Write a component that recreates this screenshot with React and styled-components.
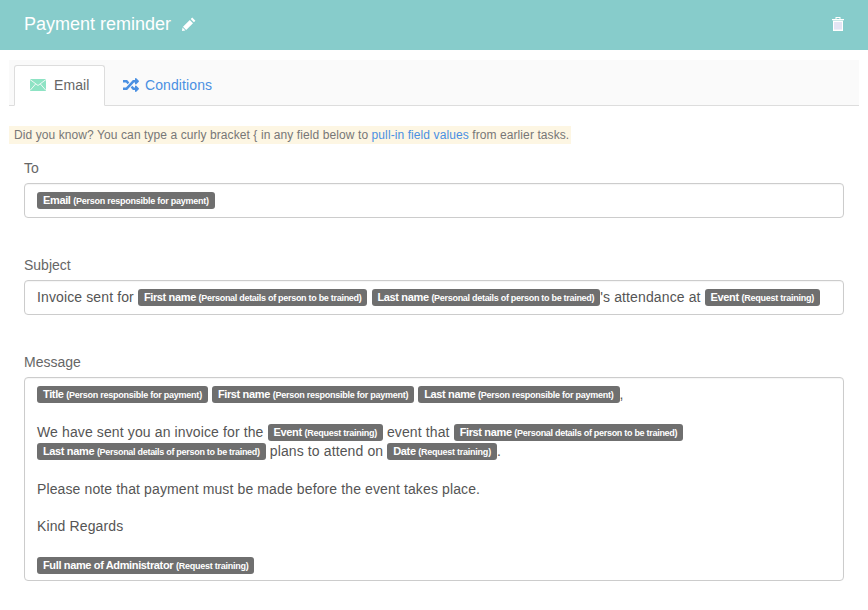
import React from "react";
import styled, { createGlobalStyle } from "styled-components";
import { FaRandom } from "react-icons/fa";

const Global = createGlobalStyle`
  html, body { margin: 0; padding: 0; background: #fff; }
  body { font-family: "Liberation Sans", Arial, sans-serif; font-size: 14px; color: #555; }
`;

const Page = styled.div`
  width: 868px;
  height: 610px;
  overflow: hidden;
`;

const Header = styled.header`
  height: 50px;
  background: #87cccb;
  display: flex;
  align-items: center;
  justify-content: space-between;
  padding: 0 24px 3px 24px;
  box-sizing: border-box;
`;

const TitleGroup = styled.div`
  display: flex;
  align-items: center;
  gap: 11px;
`;

const Title = styled.h1`
  margin: 0;
  font-size: 18px;
  font-weight: 400;
  line-height: 22px;
  color: #fff;
`;

const IconSvg = styled.svg`
  display: block;
  flex: none;
`;

const Tabs = styled.nav`
  margin: 10px 9px 0;
  height: 46px;
  box-sizing: border-box;
  background: #fafafa;
  border-bottom: 1px solid #ddd;
  display: flex;
  align-items: flex-end;
  padding-left: 5px;
`;

const Tab = styled.div`
  height: 41px;
  width: ${(p) => p.$width}px;
  box-sizing: border-box;
  margin-bottom: -1px;
  padding-left: ${(p) => p.$inset}px;
  display: flex;
  align-items: center;
  gap: ${(p) => p.$gap}px;
  font-size: 14px;
  letter-spacing: 0.1px;
  padding-bottom: 1px;
  color: ${(p) => (p.$active ? "#666" : "#4a90e2")};
  background: ${(p) => (p.$active ? "#fff" : "transparent")};
  border: 1px solid ${(p) => (p.$active ? "#ddd" : "transparent")};
  border-bottom-color: ${(p) => (p.$active ? "#fff" : "transparent")};
  border-radius: 3px 3px 0 0;
`;

const Tip = styled.p`
  margin: 20px 0 0 9px;
  width: 562px;
  height: 18px;
  box-sizing: border-box;
  padding-left: 5px;
  background: #fdf6e3;
  color: #777;
  font-size: 12px;
  letter-spacing: 0.09px;
  line-height: 18px;
  white-space: nowrap;
`;

const TipLink = styled.span`
  color: #4a90e2;
`;

const Form = styled.div`
  padding: 16px 24px 0;
`;

const FieldGroup = styled.section`
  margin-bottom: ${(p) => p.$gap}px;
`;

const Label = styled.label`
  display: block;
  height: 17px;
  line-height: 17px;
  margin-bottom: 6px;
  font-size: 14px;
  color: #666;
`;

const Box = styled.div`
  width: 820px;
  box-sizing: border-box;
  padding: 7px 12px 0;
  height: ${(p) => p.$height}px;
  border: 1px solid #ccc;
  border-radius: 4px;
  box-shadow: inset 0 1px 1px rgba(0, 0, 0, 0.04);
  font-size: 14px;
  line-height: 19px;
  color: #555;
  letter-spacing: 0.12px;
`;

const Line = styled.div`
  margin-bottom: ${(p) => p.$after || 0}px;
`;

const Chip = styled.span`
  display: inline-block;
  height: 17px;
  line-height: 16px;
  padding: 0 6px;
  vertical-align: 1px;
  background: #6f6f6f;
  border-radius: 3px;
  color: #fff;
  font-size: 11px;
  font-weight: 700;
  letter-spacing: -0.36px;
  white-space: nowrap;
`;

const ChipNote = styled.span`
  font-size: 9px;
  letter-spacing: ${(p) => (p.$tight ? -0.29 : -0.25)}px;
`;

const PERSON = "Person responsible for payment";
const DETAILS = "Personal details of person to be trained";
const TRAINING = "Request training";

const Tag = ({ name, note }) => (
  <Chip>
    {name} <ChipNote $tight={note === DETAILS}>({note})</ChipNote>
  </Chip>
);

const Pencil = () => (
  <IconSvg width="14" height="14" viewBox="0 0 14 14">
    <path d="M10.2 0.6l3.2 3.2-1.5 1.5-3.2-3.2zM7.8 3l3.2 3.2-6.8 6.8-3.2-3.2zM0.5 10.6l2.9 2.9-3.4 0.5z" fill="#fff" />
  </IconSvg>
);

const Trash = () => (
  <IconSvg width="12" height="14" viewBox="0 0 12 14">
    <path d="M0 2h12v1.2H0z M3.5 0h5v2H7.5V1H4.5v1H3.5z" fill="#fff" />
    <rect x="1" y="3.6" width="10" height="10.4" fill="#fff" />
    <path d="M3 5v7.6M5 5v7.6M7 5v7.6M9 5v7.6" stroke="#c9cbe8" strokeWidth="1" />
  </IconSvg>
);

const Envelope = () => (
  <IconSvg width="16" height="12" viewBox="0 0 16 12">
    <rect width="16" height="12" fill="#8ee3c4" />
    <path d="M0 0.5l8 6 8-6M0 11.5l5.6-6.5M16 11.5l-5.6-6.5" fill="none" stroke="#fafafa" strokeWidth="0.9" />
  </IconSvg>
);

export default function App() {
  return (
    <Page>
      <Global />
      <Header>
        <TitleGroup>
          <Title>Payment reminder</Title>
          <Pencil />
        </TitleGroup>
        <Trash />
      </Header>
      <Tabs>
        <Tab $active $width={91} $inset={15} $gap={8}>
          <Envelope />
          Email
        </Tab>
        <Tab $width={120} $inset={17} $gap={6}>
          <FaRandom size={16} />
          Conditions
        </Tab>
      </Tabs>
      <Tip>
        Did you know? You can type a curly bracket {"{"} in any field below to <TipLink>pull-in field values</TipLink> from earlier tasks.
      </Tip>
      <Form>
        <FieldGroup $gap={39}>
          <Label>To</Label>
          <Box $height={35}>
            <Tag name="Email" note={PERSON} />
          </Box>
        </FieldGroup>
        <FieldGroup $gap={39}>
          <Label>Subject</Label>
          <Box $height={35}>
            Invoice sent for <Tag name="First name" note={DETAILS} /> <Tag name="Last name" note={DETAILS} />'s attendance at <Tag name="Event" note={TRAINING} />
          </Box>
        </FieldGroup>
        <FieldGroup $gap={0}>
          <Label>Message</Label>
          <Box $height={204}>
            <Line $after={19}>
              <Tag name="Title" note={PERSON} /> <Tag name="First name" note={PERSON} /> <Tag name="Last name" note={PERSON} />,
            </Line>
            <Line $after={19}>
              We have sent you an invoice for the <Tag name="Event" note={TRAINING} /> event that <Tag name="First name" note={DETAILS} /> <Tag name="Last name" note={DETAILS} /> plans to attend on <Tag name="Date" note={TRAINING} />.
            </Line>
            <Line $after={18}>Please note that payment must be made before the event takes place.</Line>
            <Line $after={20}>Kind Regards</Line>
            <Line>
              <Tag name="Full name of Administrator" note={TRAINING} />
            </Line>
          </Box>
        </FieldGroup>
      </Form>
    </Page>
  );
}
